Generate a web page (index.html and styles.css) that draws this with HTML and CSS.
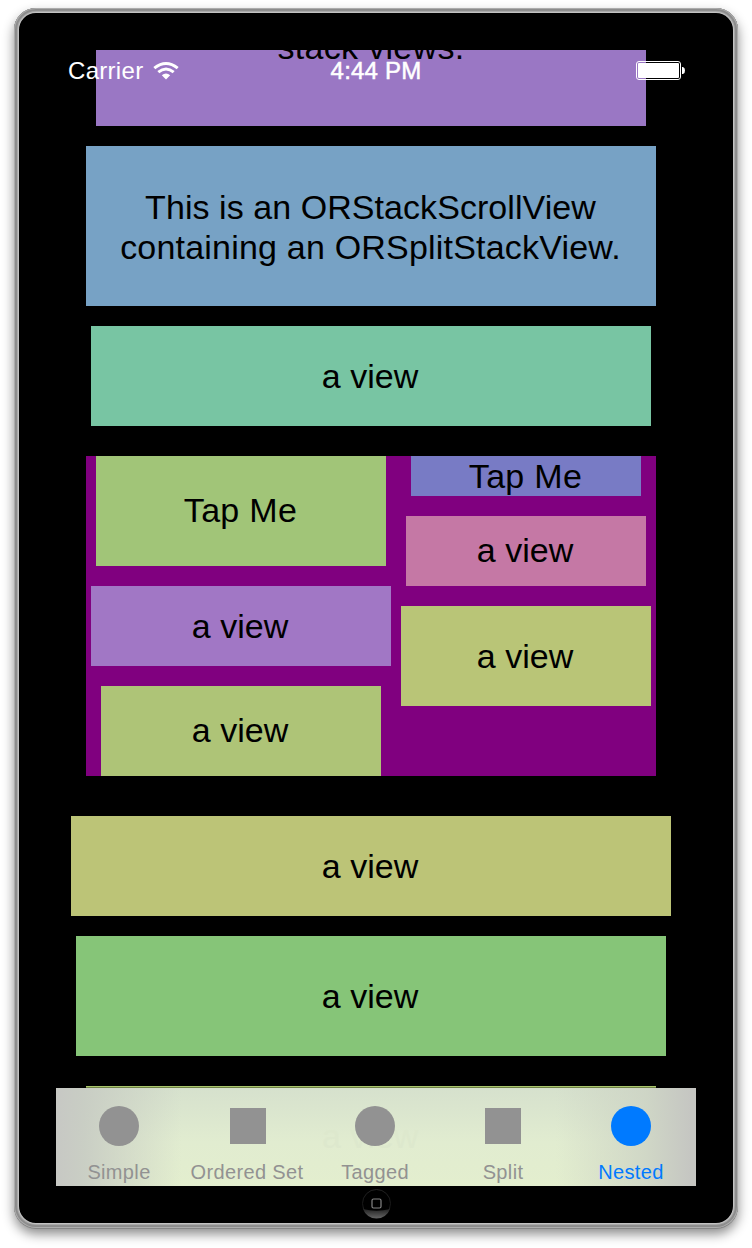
FILE: index.html
```html
<!DOCTYPE html>
<html lang="en">
<head>
<meta charset="utf-8">
<title>Nested stack views</title>
<link rel="stylesheet" href="styles.css">
</head>
<body>
<div class="device">
  <main class="screen">
    <div class="scroll">
      <div class="block intro"><span>stack views.</span></div>
      <div class="block about">This is an ORStackScrollView<br><span class="line">containing an ORSplitStackView.</span></div>
      <div class="block mint">a view</div>
      <div class="split">
        <div class="column left">
          <div class="block tap tap-green">Tap Me</div>
          <div class="block lilac">a view</div>
          <div class="block moss">a view</div>
        </div>
        <div class="column right">
          <div class="block tap tap-blue">Tap Me</div>
          <div class="block pink">a view</div>
          <div class="block olive">a view</div>
        </div>
      </div>
      <div class="block khaki">a view</div>
      <div class="block green">a view</div>
      <div class="block last"></div>
    </div>
    <header class="status">
      <div class="carrier"><span>Carrier</span>
        <svg class="wifi" width="26" height="20" viewBox="0 0 26 20">
          <g fill="none" stroke="#fff" stroke-width="3">
            <path d="M1.300 7.100Q13 -2.200 24.700 7.100"/>
            <path d="M5.300 11.200Q13 4.900 20.700 11.200"/>
          </g>
          <path d="M8.800 14.200Q13 10.800 17.200 14.200L13 18.600Z" fill="#fff"/>
        </svg>
      </div>
      <div class="time">4:44 PM</div>
      <svg class="battery" width="50" height="20" viewBox="0 0 50 20">
        <rect x=".5" y=".5" width="44" height="18" rx="2.500" fill="none" stroke="#fff"/>
        <rect x="2" y="2" width="41" height="15" rx="1" fill="#fff"/>
        <path d="M46 6h1q2 .5 2 3.500t-2 3.500h-1z" fill="#fff"/>
      </svg>
    </header>
    <nav class="tabs">
      <span class="ghost">a view</span>
      <div class="tab"><i class="icon circle"></i><span>Simple</span></div>
      <div class="tab"><i class="icon square wide"></i><span>Ordered Set</span></div>
      <div class="tab"><i class="icon circle"></i><span>Tagged</span></div>
      <div class="tab"><i class="icon square"></i><span>Split</span></div>
      <div class="tab active"><i class="icon circle"></i><span>Nested</span></div>
    </nav>
  </main>
  <svg class="home" width="30" height="30" viewBox="0 0 30 30">
    <defs>
      <linearGradient id="shine" x1="0" y1="0" x2="0" y2="1">
        <stop offset="0" stop-color="#222"/><stop offset="1" stop-color="#666"/>
      </linearGradient>
      <linearGradient id="rim" x1="0" y1="0" x2="0" y2="1">
        <stop offset="0" stop-color="#222"/><stop offset=".6" stop-color="#181818"/><stop offset="1" stop-color="#555"/>
      </linearGradient>
    </defs>
    <circle cx="15.500" cy="14.500" r="14" fill="#000" stroke="url(#rim)"/>
    <path d="M2 20Q15.500 23.500 29 20A14.300 14.300 0 0 1 2 20Z" fill="url(#shine)"/>
    <rect x="11" y="10" width="9" height="9" rx="1.500" fill="none" stroke="#858585" stroke-width="1.200"/>
  </svg>
</div>
</body>
</html>
```
FILE: styles.css
```css
* { box-sizing: border-box; }

body {
  margin: 0;
  height: 1248px;
  padding: 8px 14px;
  background: #fff;
  overflow: hidden;
  font-family: "Liberation Sans", Arial, sans-serif;
}

.device {
  width: 724px;
  height: 1220px;
  padding: 42px 42px 0;
  border-radius: 22px;
  background: #000;
  box-shadow:
    inset 0 0 0 1px #acacac,
    inset 0 0 0 2px #8c8c8c,
    inset 0 0 0 3px #8e8e8e,
    inset 0 0 0 4px #a9a9a9,
    inset 0 0 0 5px #c2c2c2,
    0 1px 0 #858585,
    0 6px 12px rgba(0, 0, 0, .46);
}

.screen {
  position: relative;
  width: 640px;
  height: 1136px;
  overflow: hidden;
}

.scroll {
  width: 630px;
  display: flex;
  flex-direction: column;
  align-items: center;
}

.block {
  display: flex;
  flex-direction: column;
  align-items: center;
  justify-content: center;
  flex: none;
  padding-right: 2px;
  font-size: 34px;
  line-height: 40px;
  text-align: center;
  white-space: nowrap;
  color: #000;
}

.intro { width: 550px; height: 76px; background: #9a77c4; justify-content: flex-start; overflow: hidden; padding-right: 0; letter-spacing: .3px; }
.intro span { margin-top: -23px; }
.about { display: block; width: 570px; height: 160px; padding-top: 41px; padding-right: 1px; margin-top: 20px; background: #77a2c5; letter-spacing: .06px; }
.line { letter-spacing: .2px; }
.mint { width: 560px; height: 100px; margin-top: 20px; background: #78c5a3; }

.split {
  display: flex;
  width: 570px;
  height: 320px;
  margin-top: 30px;
  background: #80007f;
}
.column { display: flex; flex-direction: column; align-items: center; gap: 20px; }
.left { width: 310px; }
.right { width: 260px; }
.tap { letter-spacing: .3px; padding-right: 1px; }
.tap-green { width: 290px; height: 110px; padding-bottom: 2px; background: #a1c578; }
.lilac { width: 300px; height: 80px; background: #a177c5; }
.moss { width: 280px; height: 90px; padding-bottom: 2px; background: #aec477; }
.tap-blue { width: 230px; height: 40px; background: #787bc5; }
.pink { width: 240px; height: 70px; padding-bottom: 2px; background: #c578a5; }
.olive { width: 250px; height: 100px; background: #b9c577; }

.khaki { width: 600px; height: 100px; margin-top: 40px; background: #bcc477; }
.green { width: 590px; height: 120px; margin-top: 20px; background: #86c578; }
.last { width: 570px; height: 50px; margin-top: 30px; background: linear-gradient(#a9c66c 1px, #718346 1px); }

.status {
  position: absolute;
  inset: 0 0 auto;
  height: 42px;
  display: grid;
  grid-template-columns: 1fr auto 1fr;
  align-items: center;
  padding: 0 10px 0 12px;
  color: #fff;
  font-size: 24px;
  line-height: 40px;
}
.carrier { display: flex; align-items: center; gap: 9.5px; letter-spacing: .3px; }
.wifi { margin-bottom: 1px; }
.time { margin-right: 2px; letter-spacing: .2px; -webkit-text-stroke: .5px #fff; }
.battery { justify-self: end; }

.tabs {
  position: absolute;
  inset: auto 0 0;
  height: 98px;
  display: grid;
  grid-template-columns: repeat(5, 128px);
  background:
    linear-gradient(90deg, #c7c8c4 0, rgba(199, 203, 195, .9) 28px, rgba(205, 214, 190, 0) 125px, rgba(205, 214, 190, 0) 500px, rgba(204, 210, 196, .8) 590px, #c5c6c2 635px),
    linear-gradient(#d6e1cd, #e1ecd0 55%, #e3eece);
}
.ghost {
  position: absolute;
  left: 266px;
  top: 28px;
  font-size: 34px;
  line-height: 40px;
  color: #dde8cd;
}
.tab {
  position: relative;
  display: flex;
  flex-direction: column;
  align-items: center;
  padding-top: 18px;
  margin-left: -2px;
  color: #929292;
  font-size: 20px;
  line-height: 24px;
}
.icon { width: 40px; height: 40px; background: #929292; }
.circle { border-radius: 50%; }
.square { width: 36px; height: 36px; margin: 2px 0; }
.wide { margin-left: 2px; }
.tab span { margin-top: 14px; letter-spacing: .35px; white-space: nowrap; }
.active { color: #007aff; }
.active .icon { background: #007aff; }

.home { display: block; margin: 3px auto 0; }
```
